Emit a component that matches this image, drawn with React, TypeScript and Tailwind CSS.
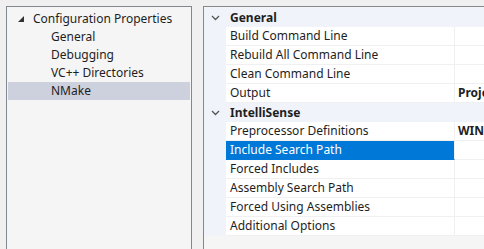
import { ReactNode } from "react";

type Row = { name: string; value?: string; selected?: boolean };

const groups: { title: string; rows: Row[] }[] = [
  {
    title: "General",
    rows: [
      { name: "Build Command Line" },
      { name: "Rebuild All Command Line" },
      { name: "Clean Command Line" },
      { name: "Output", value: "Project" },
    ],
  },
  {
    title: "IntelliSense",
    rows: [
      { name: "Preprocessor Definitions", value: "WIN32;_DEBUG" },
      { name: "Include Search Path", selected: true },
      { name: "Forced Includes" },
      { name: "Assembly Search Path" },
      { name: "Forced Using Assemblies" },
      { name: "Additional Options" },
    ],
  },
];

function Chevron() {
  return (
    <svg width="9" height="6" viewBox="0 0 9 6" className="text-[#555]">
      <path d="M1 1l3.5 3.5L8 1" fill="none" stroke="currentColor" strokeWidth="1.3" />
    </svg>
  );
}

function TreeItem({ children, selected }: { children: ReactNode; selected?: boolean }) {
  return (
    <div className={`h-[18px] flex items-center pl-[43px] ${selected ? "bg-[#cdd0dd]" : ""}`}>
      {children}
    </div>
  );
}

export default function App() {
  return (
    <div
      className="w-[484px] h-[249px] bg-[#f0f0f0] flex pt-[6px] pl-[6px] gap-[11px] overflow-hidden text-[12px] text-[#1e1e1e]"
      style={{ fontFamily: '"Segoe UI", "Noto Sans", sans-serif' }}
    >
      {/* Tree */}
      <div className="w-[186px] h-[260px] shrink-0 border border-[#828790] bg-[#f5f5f5] pt-[3px] px-[1px]">
        <div className="h-[18px] flex items-center pl-[10px]">
          <svg width="6" height="6" viewBox="0 0 6 6" className="mr-[9px]">
            <path d="M6 0v6H0z" fill="#333" />
          </svg>
          Configuration Properties
        </div>
        <TreeItem>General</TreeItem>
        <TreeItem>Debugging</TreeItem>
        <TreeItem>VC++ Directories</TreeItem>
        <TreeItem selected>NMake</TreeItem>
      </div>

      {/* Property grid */}
      <div className="flex-1 h-[260px] border border-r-0 border-[#828790] bg-[#f5f5f5] pt-[1px]">
        <div className="bg-[#f0f4fa]">
          {groups.map((g) => (
            <div key={g.title}>
              <div className="h-[19px] flex items-center">
                <div className="w-[22px] flex justify-center pl-[1px]">
                  <Chevron />
                </div>
                <span className="font-bold pl-[4px]">{g.title}</span>
              </div>
              {g.rows.map((r) => (
                <div key={r.name} className="h-[19px] flex">
                  <div className="w-[22px] shrink-0" />
                  <div
                    className={`w-[229px] shrink-0 flex items-center pl-[4px] border-b border-r border-[#f0f0f0] ${
                      r.selected ? "bg-[#0078d7] text-white border-b-[#0078d7]" : "bg-white"
                    }`}
                  >
                    {r.name}
                  </div>
                  <div className="flex-1 flex items-center pl-[3px] bg-white border-b border-[#f0f0f0] font-bold whitespace-nowrap overflow-hidden">
                    {r.value}
                  </div>
                </div>
              ))}
            </div>
          ))}
        </div>
      </div>
    </div>
  );
}
